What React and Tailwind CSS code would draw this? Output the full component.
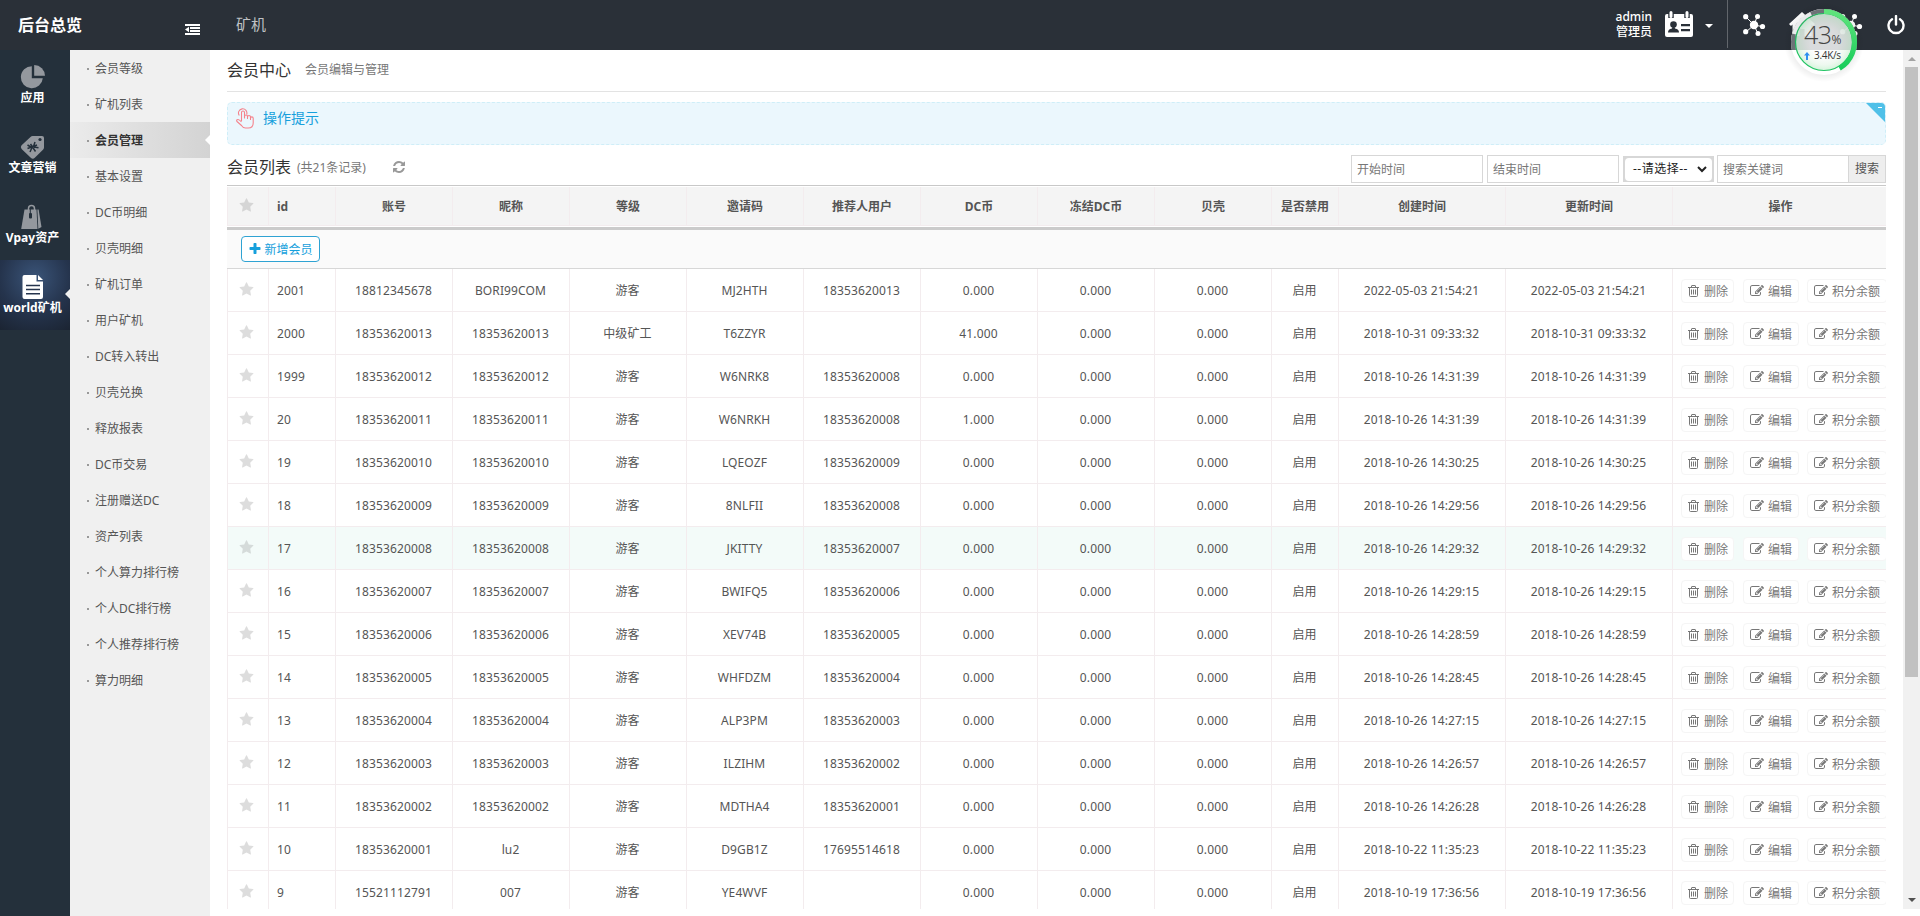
import React, { useState } from 'react';

const railItems = [
    { label: '应用', icon: 'pie' },
    { label: '文章营销', icon: 'tag' },
    { label: 'Vpay资产', icon: 'bag' },
    { label: 'world矿机', icon: 'doc' },
];

const menuItems = [
    '会员等级', '矿机列表', '会员管理', '基本设置', 'DC币明细', '贝壳明细',
    '矿机订单', '用户矿机', 'DC转入转出', '贝壳兑换', '释放报表', 'DC币交易',
    '注册赠送DC', '资产列表', '个人算力排行榜', '个人DC排行榜', '个人推荐排行榜', '算力明细',
];

const columns = [
    { title: '账号', width: 'w-[117px]' },
    { title: '昵称', width: 'w-[117px]' },
    { title: '等级', width: 'w-[117px]' },
    { title: '邀请码', width: 'w-[117px]' },
    { title: '推荐人用户', width: 'w-[117px]' },
    { title: 'DC币', width: 'w-[117px]' },
    { title: '冻结DC币', width: 'w-[117px]' },
    { title: '贝壳', width: 'w-[117px]' },
    { title: '是否禁用', width: 'w-[67px]' },
    { title: '创建时间', width: 'w-[167px]' },
    { title: '更新时间', width: 'w-[167px]' },
];

// id, account, nickname, level, invite code, referrer, DC, time
const members = [
    ['2001', '18812345678', 'BORI99COM', '游客', 'MJ2HTH', '18353620013', '0.000', '2022-05-03 21:54:21'],
    ['2000', '18353620013', '18353620013', '中级矿工', 'T6ZZYR', '', '41.000', '2018-10-31 09:33:32'],
    ['1999', '18353620012', '18353620012', '游客', 'W6NRK8', '18353620008', '0.000', '2018-10-26 14:31:39'],
    ['20', '18353620011', '18353620011', '游客', 'W6NRKH', '18353620008', '1.000', '2018-10-26 14:31:39'],
    ['19', '18353620010', '18353620010', '游客', 'LQEOZF', '18353620009', '0.000', '2018-10-26 14:30:25'],
    ['18', '18353620009', '18353620009', '游客', '8NLFII', '18353620008', '0.000', '2018-10-26 14:29:56'],
    ['17', '18353620008', '18353620008', '游客', 'JKITTY', '18353620007', '0.000', '2018-10-26 14:29:32'],
    ['16', '18353620007', '18353620007', '游客', 'BWIFQ5', '18353620006', '0.000', '2018-10-26 14:29:15'],
    ['15', '18353620006', '18353620006', '游客', 'XEV74B', '18353620005', '0.000', '2018-10-26 14:28:59'],
    ['14', '18353620005', '18353620005', '游客', 'WHFDZM', '18353620004', '0.000', '2018-10-26 14:28:45'],
    ['13', '18353620004', '18353620004', '游客', 'ALP3PM', '18353620003', '0.000', '2018-10-26 14:27:15'],
    ['12', '18353620003', '18353620003', '游客', 'ILZIHM', '18353620002', '0.000', '2018-10-26 14:26:57'],
    ['11', '18353620002', '18353620002', '游客', 'MDTHA4', '18353620001', '0.000', '2018-10-26 14:26:28'],
    ['10', '18353620001', 'lu2', '游客', 'D9GB1Z', '17695514618', '0.000', '2018-10-22 11:35:23'],
    ['9', '15521112791', '007', '游客', 'YE4WVF', '', '0.000', '2018-10-19 17:36:56'],
];

const iconPaths = {
    edit: 'M888 1184l116-116-152-152-116 116v56h96v96h56zm440-720q-16-16-33 1l-350 350q-17 17-1 33t33-1l350-350q17-17 1-33zm80 594v190q0 119-84.500 203.500t-203.500 84.500h-832q-119 0-203.500-84.500t-84.500-203.500v-832q0-119 84.500-203.500t203.500-84.500h832q63 0 117 25 15 7 18 23 3 17-9 29l-49 49q-14 14-32 8-23-6-45-6h-832q-66 0-113 47t-47 113v832q0 66 47 113t113 47h832q66 0 113-47t47-113v-126q0-13 9-22l64-64q15-15 35-7t20 29zm-96-738l288 288-672 672h-288v-288zm444 132l-92 92-288-288 92-92q28-28 68-28t68 28l152 152q28 28 28 68t-28 68z',
    refresh: 'M1639 1056q0 5-1 7-64 268-268 434.500t-478 166.500q-146 0-282.500-55t-243.500-157l-129 129q-19 19-45 19t-45-19-19-45v-448q0-26 19-45t45-19h448q26 0 45 19t19 45-19 45l-137 137q71 66 161 102t187 36q134 0 250-65t186-179q11-17 53-117 8-23 30-23h192q13 0 22.500 9.500t9.500 22.500zm25-800v448q0 26-19 45t-45 19h-448q-26 0-45-19t-19-45 19-45l138-138q-148-137-349-137-134 0-250 65t-186 179q-11 17-53 117-8 23-30 23h-199q-13 0-22.500-9.500t-9.500-22.500v-7q65-268 270-434.500t480-166.500q146 0 284 55.500t245 156.500l130-129q19-19 45-19t45 19 19 45z',
    plus: 'M1600 736v192q0 40-28 68t-68 28h-416v416q0 40-28 68t-68 28h-192q-40 0-68-28t-28-68v-416h-416q-40 0-68-28t-28-68v-192q0-40 28-68t68-28h416v-416q0-40 28-68t68-28h192q40 0 68 28t28 68v416h416q40 0 68 28t28 68z',
    star: 'M1728 647q0 22-26 48l-363 354 86 500q1 7 1 20 0 21-10.500 35.500t-30.500 14.500q-19 0-40-12l-449-236-449 236q-22 12-40 12-21 0-31.500-14.500t-10.500-35.500q0-6 2-20l86-500-364-354q-25-27-25-48 0-37 56-46l502-73 225-455q19-41 49-41t49 41l225 455 502 73q56 9 56 46z',
};

const Icon = ({ name, size, className }) => (
    <svg className={`shrink-0 ${className}`} width={size} height={size} viewBox="0 0 1792 1792" fill="currentColor">
        <path d={iconPaths[name]} />
    </svg>
);

const RailIcon = ({ name }) => {
    if (name === 'pie') {
        return (
            <svg width="26" height="26" viewBox="0 0 26 26" fill="#94989e">
                <path d="M11.8 2.200A11 11 0 1 0 22.800 14.200H11.800z" />
                <path d="M14.200 1A11 11 0 0 1 25 11.800H14.200z" />
            </svg>
        );
    }
    if (name === 'tag') {
        return (
            <svg width="26" height="26" viewBox="0 0 26 26">
                <path d="M12.500 2H22q2 0 2 2v9.500q0 1-.8 2l-8.400 8.300q-2 2-4 0L1.600 15q-1.600-2 0-3.800L10.500 3q1-1 2-1z" fill="#94989e" />
                <circle cx="20" cy="5.500" r="1.600" fill="#24303b" />
                <path d="M7.500 14.500l9.500-3.500M10.500 10l5 7.500M15 8l-1.500 4.500M7.500 11l4 2.500M14 13l4.500.8M10 18l2-4.500" stroke="#24303b" strokeWidth="1.500" fill="none" />
            </svg>
        );
    }
    if (name === 'bag') {
        return (
            <svg width="26" height="26" viewBox="0 0 26 26">
                <path d="M8.500 6V4.500a3 3 0 0 1 6 0V6" fill="none" stroke="#94989e" strokeWidth="1.500" />
                <path d="M4.500 5.500h12L17.500 25H1.200z" fill="#94989e" />
                <path d="M17.400 5.500h1.200L21.500 23l-3.200 1.800z" fill="#94989e" />
                <path d="M10.300 4v6" stroke="#24303b" strokeWidth="1" />
                <rect x="9" y="9" width="3" height="5.500" rx="1" fill="#24303b" />
            </svg>
        );
    }
    return (
        <svg width="26" height="26" viewBox="0 0 26 26">
            <path d="M4.500 1h12v6.500H23V23q0 2-2 2H4.500q-2 0-2-2V3q0-2 2-2z" fill="#fff" />
            <path d="M18 1l5 5h-5z" fill="#fff" />
            <path d="M6 11.500h14M6 15.500h14M6 19.800h14" stroke="#25344d" strokeWidth="1.500" />
        </svg>
    );
};

const TrashIcon = () => (
    <svg width="11" height="12" viewBox="0 0 11 12" fill="none" stroke="#777" strokeWidth="1">
        <path d="M0 2.500h11M3.500 2.500V1q0-.5.5-.5h3q.5 0 .5.5v1.500M1.500 2.500V10.500q0 1 1 1h6q1 0 1-1V2.500M3.500 4.500v5M5.500 4.500v5M7.500 4.500v5" />
    </svg>
);

const NodesIcon = () => (
    <svg width="24" height="24" viewBox="0 0 24 24" fill="#fff" stroke="#fff">
        <path d="M12 12L4 4M12 12L15 4M12 12L4 19M12 12L16 21M12 12L20 13.500" strokeWidth="1" />
        <g stroke="none">
            <circle cx="12" cy="12" r="4.200" />
            <circle cx="3.700" cy="3.700" r="2.600" />
            <circle cx="15.500" cy="3.500" r="2.500" />
            <circle cx="3.700" cy="18.700" r="2.600" />
            <circle cx="16" cy="20.500" r="2.500" />
            <circle cx="20.500" cy="13.500" r="2.600" />
        </g>
    </svg>
);

const Header = () => (
    <header className="relative z-10 flex h-[50px] shrink-0 items-start bg-[#2a3038] text-white">
        <div className="flex w-[210px] justify-between pr-[10px] pl-[18px]">
            <h1 className="pt-[13px] text-[16px] leading-6 font-bold">后台总览</h1>
            <svg className="mt-6" width="15" height="11" viewBox="0 0 15 11" fill="#fff">
                <path d="M0 0h15v2H0zM5 3h10v2H5zM5 6h10v2H5zM0 9h15v2H0zM0 5.500l4-2.700v5.400z" />
            </svg>
        </div>
        <div className="pt-[12px] pl-[26px] text-[15px] leading-6 text-[#bfc1c4]">矿机</div>
        <div className="ml-auto flex">
            <div className="pt-[9px] pr-px text-right text-[12px] leading-[15px] font-medium">
                <div>admin</div>
                <div>管理员</div>
            </div>
            <svg className="mt-[11px] ml-[12px]" width="28" height="26" viewBox="0 0 28 26">
                <path d="M2 3h24q2 0 2 2v19q0 2-2 2H2q-2 0-2-2V5q0-2 2-2z" fill="#fff" />
                <path d="M6 0v7M22 0v7" stroke="#2a3038" strokeWidth="5.500" />
                <path d="M6 1.500v4M22 1.500v4" stroke="#fff" strokeWidth="3" strokeLinecap="round" />
                <circle cx="8.500" cy="13.500" r="3.300" fill="#2a3038" />
                <path d="M3 21.500q0-3.500 4-4l.5-2h2l.5 2q4 .5 4 4zM16 13h9v2.200h-9zM16 18h9v2.200h-9z" fill="#2a3038" />
            </svg>
            <svg className="mt-6 ml-3" width="8" height="4" viewBox="0 0 8 4">
                <path d="M0 0h8L4 4z" fill="#fff" />
            </svg>
            <div className="ml-[14px] h-12 w-px bg-[#62666c]" />
            <div className="mt-[13px] ml-[14px]">
                <NodesIcon />
            </div>
            <svg className="mt-[12px] ml-[23px]" width="26" height="24" viewBox="0 0 26 24" fill="#fff">
                <path d="M13 0L26 12l-2 2-1.500-1.500V24h-7v-7h-5v7h-7V12.500L2 14l-2-2z" />
            </svg>
            <div className="mt-[13px] ml-[24px]">
                <NodesIcon />
            </div>
            <svg className="mt-[15px] mr-[15px] ml-[24px]" width="18" height="20" viewBox="0 0 18 20" fill="none" stroke="#fff" strokeLinecap="round">
                <path d="M5 4.200a7.500 7.500 0 1 0 8 0" strokeWidth="2.400" />
                <path d="M9 1v8.500" strokeWidth="2.400" />
            </svg>
        </div>
    </header>
);

// Floating network monitor that hangs over the top right corner
const SpeedBall = () => (
    <div className="absolute top-[1px] left-[1783px] z-20 h-[82px] w-[82px]">
        <svg width="82" height="82" viewBox="0 0 82 82">
            <defs>
                <radialGradient id="halo">
                    <stop offset="0.780" stopColor="#000" stopOpacity="0.080" />
                    <stop offset="1" stopColor="#000" stopOpacity="0" />
                </radialGradient>
                <radialGradient id="ball">
                    <stop offset="0.500" stopColor="#fff" stopOpacity="0.900" />
                    <stop offset="0.800" stopColor="#eefaf0" stopOpacity="0.900" />
                    <stop offset="1" stopColor="#d3f5da" stopOpacity="0.950" />
                </radialGradient>
                <linearGradient id="arc" x1="0" y1="0" x2="0" y2="1">
                    <stop offset="0" stopColor="#5fe47c" />
                    <stop offset="1" stopColor="#18cd5a" />
                </linearGradient>
                <clipPath id="top">
                    <rect width="82" height="49" />
                </clipPath>
            </defs>
            <circle cx="41" cy="41" r="40" fill="url(#halo)" />
            <circle cx="41" cy="41" r="31" fill="none" stroke="#fff" strokeWidth="4" />
            <circle cx="41" cy="41" r="31" fill="none" stroke="#6d7277" strokeWidth="4" clipPath="url(#top)" />
            <path d="M11 33A31 31 0 0 1 28 12.800" fill="none" stroke="#fff" strokeWidth="4" strokeOpacity="0.850" />
            <circle cx="41" cy="41" r="28.500" fill="url(#ball)" stroke="#20c463" strokeWidth="1.200" />
            <path d="M13 49A29 29 0 1 1 69 49z" fill="#24303b" fillOpacity="0.080" />
            <path d="M41 10.500A30.500 30.500 0 0 1 56.500 67.300" fill="none" stroke="url(#arc)" strokeWidth="5" />
        </svg>
        <div className="absolute top-[20px] left-[21px] flex items-baseline font-['Open_Sans',sans-serif] text-[#444]">
            <span className="text-[25px] leading-[26px] font-light tracking-[-0.5px]">43</span>
            <span className="text-[12px] leading-[14px]">%</span>
        </div>
        <div className="absolute top-[48px] left-[21px] flex items-center font-['Open_Sans',sans-serif] text-[10px] leading-[13px] tracking-[-0.3px] text-[#333]">
            <svg className="mr-[4px]" width="6" height="8" viewBox="0 0 6 8" fill="#2f8ff0">
                <path d="M3 0l3 3.500H4V8H2V3.500H0z" />
            </svg>
            3.4K/s
        </div>
    </div>
);

const Rail = () => (
    <nav className="w-[70px] shrink-0 bg-[#24303b]">
        {railItems.map((item) => {
            const active = item.icon === 'doc';
            return (
                <div
                    key={item.label}
                    className={`relative flex h-[70px] flex-col items-center pt-[14px] ${active
                        ? 'bg-[radial-gradient(circle_at_50%_25%,#3a5478_0%,#25344d_55%,#1b2432_100%)]'
                        : ''
                        }`}
                >
                    <span className="mr-[5px] h-[25px]"><RailIcon name={item.icon} /></span>
                    <span className="mr-[5px] text-[12px] leading-[17px] font-bold whitespace-nowrap text-white">{item.label}</span>
                    {active && <i className="absolute top-[29px] right-0 border-y-[5px] border-r-[5px] border-y-transparent border-r-[#f0f0f0]" />}
                </div>
            );
        })}
    </nav>
);

const SubMenu = ({ current, onSelect }) => (
    <nav className="w-[140px] shrink-0 bg-[#f0f0f0]">
        {menuItems.map((item) => (
            <div
                key={item}
                onClick={() => onSelect(item)}
                className={`relative flex h-9 items-center pt-px pl-[17px] text-[12px] ${item === current
                    ? 'bg-linear-to-r from-[#ebebeb] to-[#d3d3d3] font-bold text-[#333]'
                    : 'text-[#555]'
                    }`}
            >
                <i className="mt-px mr-[6px] h-[2px] w-[2px] bg-[#999]" />
                {item}
                {item === current && (
                    <i className="absolute top-[13px] right-0 border-y-[5px] border-r-[5px] border-y-transparent border-r-white" />
                )}
            </div>
        ))}
    </nav>
);

const Tips = () => (
    <div className="relative mt-[10px] flex h-[43px] overflow-hidden rounded-[5px] border border-dashed border-[#cfeef8] bg-[#ebf7fd] pt-[5px] pl-2">
        <svg width="19" height="21" viewBox="0 0 19 21" fill="none" stroke="#f5838c" strokeWidth="1.100" strokeLinejoin="round">
            <path d="M5.500 13V4.500a1.500 1.500 0 0 1 3 0V10V8.500a1.500 1.500 0 0 1 3 0V10.500V9a1.500 1.500 0 0 1 3 0v2.500V10.200a1.300 1.300 0 0 1 2.700 0V15q0 5-5 5h-2.700q-2.500 0-4-2.500L1 13.500q-1-2 1-2 1.300 0 3.500 2.500" />
            <path d="M3.300 7.500a4.200 4.200 0 1 1 7.300-1" />
        </svg>
        <span className="pl-2 text-[14px] leading-5 text-[#16a0dc]">操作提示</span>
        <div className="absolute -top-px -right-px h-[21px] w-[21px] bg-[#4fc0e8] [clip-path:polygon(0_0,100%_0,100%_100%)]">
            <i className="absolute top-[5px] right-1 h-px w-1 bg-white" />
        </div>
    </div>
);

const Filters = () => (
    <div className="ml-auto flex items-start text-[12px]">
        <input className="h-7 w-[132px] border border-[#d7d7d7] px-[5px] placeholder:text-[#777]" placeholder="开始时间" />
        <input className="ml-1 h-7 w-[132px] border border-[#d7d7d7] px-[5px] placeholder:text-[#777]" placeholder="结束时间" />
        <div className="mt-px ml-[4px] flex h-[26px] w-[91px] items-center border border-[#d7d7d7] bg-[#d7d7d7] px-px">
            <div className="flex h-[23px] w-full items-center justify-between rounded-[4px] bg-white pr-[5px] pl-2 text-[#222]">
                <span className="tracking-[0.5px]">--请选择--</span>
                <svg width="10" height="7" viewBox="0 0 10 7" fill="none" stroke="#222" strokeWidth="2">
                    <path d="M1 1l4 4 4-4" />
                </svg>
            </div>
        </div>
        <input className="ml-[3px] h-7 w-[132px] border border-[#d7d7d7] px-[5px] placeholder:text-[#777]" placeholder="搜索关键词" />
        <button className="h-7 w-[37px] border border-l-0 border-[#d7d7d7] bg-[#eee] text-[#555]">搜索</button>
    </div>
);

const Cell = ({ width, children }) => (
    <div className={`flex shrink-0 items-center justify-center border-r border-[#f3ecee] ${width}`}>{children}</div>
);

const Action = ({ icon, label, className }) => (
    <button className={`flex h-6 shrink-0 items-center rounded-[4px] border border-[#f5f5f5] bg-white pt-px pl-[6px] text-[12px] whitespace-nowrap text-[#777] ${className}`}>
        {icon}
        {label}
    </button>
);

const MemberRow = ({ member, highlighted }) => {
    const [id, account, nickname, level, code, referrer, dc, time] = member;
    const values = [account, nickname, level, code, referrer, dc, '0.000', '0.000', '启用', time, time];
    return (
        <div className={`flex h-[43px] border-b border-l border-[#f3ecee] ${highlighted ? 'bg-[#f3fbf9]' : 'bg-white'}`}>
            <Cell width="w-[41px]">
                <Icon name="star" size={15} className={`mr-[3px] mb-[2px] ${highlighted ? 'text-[#d5dbda]' : 'text-[#ddd]'}`} />
            </Cell>
            <div className="flex w-[67px] shrink-0 items-center border-r border-[#f3ecee] pt-[2px] pl-2 tracking-[0.12px]">{id}</div>
            {values.map((value, i) => (
                <Cell key={columns[i].title} width={columns[i].width}>
                    <span className="pt-[2px] pr-px tracking-[0.12px]">{value}</span>
                </Cell>
            ))}
            <div className="flex min-w-0 flex-1 items-center overflow-hidden pt-[2px] pl-2">
                <Action className="w-[53px]" icon={<span className="mr-[5px] mb-px"><TrashIcon /></span>} label="删除" />
                <Action className="ml-[9px] w-14" icon={<Icon name="edit" size={14} className="mr-1 mb-[2px]" />} label="编辑" />
                <Action className="ml-2 w-20" icon={<Icon name="edit" size={14} className="mr-1 mb-[2px]" />} label="积分余额" />
            </div>
        </div>
    );
};

const MemberTable = () => (
    <div className="mt-[2px] text-[12px] text-[#555]">
        <div className="border-t border-[#c8c8c8] py-px">
            <div className="flex h-[39px] border-b border-l border-[#f3ecee] bg-[#f4f4f4] font-bold">
                <Cell width="w-[41px]"><Icon name="star" size={15} className="mr-[3px] mb-[2px] text-[#d5d5d5]" /></Cell>
                <div className="flex w-[67px] shrink-0 items-center border-r border-[#f3ecee] pt-px pl-2">id</div>
                {columns.map((column) => (
                    <Cell key={column.title} width={column.width}>
                        <span className="pt-px">{column.title}</span>
                    </Cell>
                ))}
                <div className="flex flex-1 items-center justify-center pt-px pl-[2px]">操作</div>
            </div>
        </div>
        <div className="flex h-[42px] items-center border-t-[3px] border-b border-t-[#cbcbcb] border-b-[#d7d7d7] bg-[#fafafa] pl-[14px]">
            <button className="flex h-[26px] w-[79px] items-center justify-center rounded-[4px] border border-[#2fa3d3] bg-white pt-px text-[#16a0dc]">
                <Icon name="plus" size={14} className="mr-[2px] mb-[2px]" />
                新增会员
            </button>
        </div>
        {members.map((member) => (
            <MemberRow key={member[0]} member={member} highlighted={member[0] === '17'} />
        ))}
    </div>
);

const Scrollbar = () => (
    <div className="flex h-[859px] w-[17px] shrink-0 flex-col items-center bg-[#f1f1f1]">
        <svg className="mt-[7px] shrink-0" width="8" height="4" viewBox="0 0 8 4" fill="#a3a3a3"><path d="M4 0l4 4H0z" /></svg>
        <div className="mt-[6px] h-[610px] w-[13px] bg-[#c1c1c1]" />
        <svg className="mt-auto mb-[7px] shrink-0" width="8" height="4" viewBox="0 0 8 4" fill="#505050"><path d="M0 0h8L4 4z" /></svg>
    </div>
);

const App = () => {
    const [current, setCurrent] = useState('会员管理');

    return (
        <div className="relative flex h-screen flex-col overflow-hidden bg-white font-['Noto_Sans','Noto_Sans_CJK_SC',sans-serif]">
            <Header />
            <SpeedBall />
            <div className="flex min-h-0 flex-1">
                <Rail />
                <SubMenu current={current} onSelect={setCurrent} />
                <main className="h-[859px] min-w-0 flex-1 overflow-hidden pr-[17px] pl-[17px]">
                    {/* Page title */}
                    <div className="flex h-[42px] items-center border-b border-[#e3e3e3] pb-[2px]">
                        <h2 className="text-[16px] text-[#333]">会员中心</h2>
                        <span className="pt-px pl-[14px] text-[12px] text-[#777]">会员编辑与管理</span>
                    </div>
                    <Tips />
                    {/* List title and filters */}
                    <div className="mt-[10px] flex h-7 items-start">
                        <h3 className="text-[16px] leading-6 text-[#333]">会员列表</h3>
                        <span className="pl-[6px] text-[12px] leading-[25px] text-[#777]">(共21条记录)</span>
                        <Icon name="refresh" size={14} className="mt-[5px] ml-[26px] text-[#999]" />
                        <Filters />
                    </div>
                    <MemberTable />
                </main>
                <Scrollbar />
            </div>
        </div>
    );
};

export default App;
